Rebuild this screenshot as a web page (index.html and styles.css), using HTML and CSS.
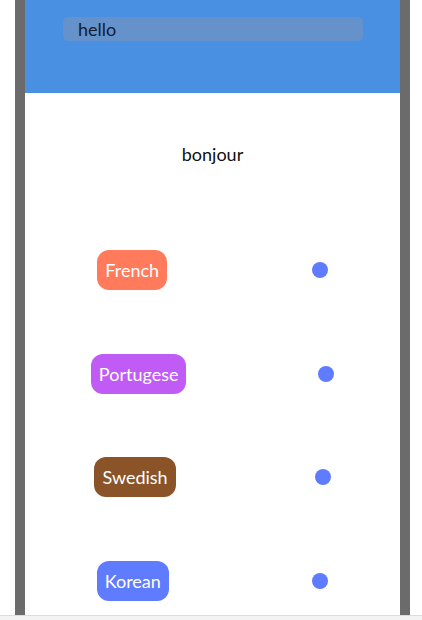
FILE: index.html
```html
<!DOCTYPE html>
<html>
<head>
<meta charset="utf-8">
<link rel="stylesheet" href="styles.css">
</head>
<body>
<div class="page">
  <div class="frame">
    <header class="header">
      <div class="search">hello</div>
    </header>
    <div class="translation">bonjour</div>
    <ul class="langs">
      <li class="row"><span class="pill french">French</span><span class="dot"></span></li>
      <li class="row"><span class="pill portugese">Portugese</span><span class="dot"></span></li>
      <li class="row"><span class="pill swedish">Swedish</span><span class="dot"></span></li>
      <li class="row"><span class="pill korean">Korean</span><span class="dot"></span></li>
    </ul>
  </div>
  <div class="scrollbar"></div>
</div>
</body>
</html>
```

FILE: styles.css
```css
* { box-sizing: border-box; }
html, body { margin: 0; padding: 0; background: #fff; }
body { font-family: Lato, "Open Sans", sans-serif; font-size: 18px; }
.page { width: 422px; height: 620px; display: flex; flex-direction: column; overflow: hidden; }
.frame {
  margin-left: 15px;
  width: 395px;
  height: 615px;
  border-left: 10px solid #6b6b6b;
  border-right: 10px solid #6b6b6b;
  overflow: hidden;
  background: #fff;
}
.header { height: 93px; background: #4a90e2; padding-top: 17px; }
.search {
  margin-left: 38px;
  width: 300px;
  height: 24px;
  border-radius: 5px;
  background: #6592cb;
  color: #0f1d36;
  padding-left: 15px;
  line-height: 25px;
  font-size: 18px;
}
.translation { text-align: center; padding-top: 50px; line-height: 22px; color: #111; font-size: 18px; }
.langs { list-style: none; margin: 85px 0 0; padding: 0; display: flex; flex-direction: column; gap: 63.5px; }
.row { display: flex; justify-content: space-around; align-items: center; height: 40px; }
.pill {
  height: 40px;
  line-height: 40px;
  padding: 0 8px;
  border-radius: 12px;
  color: #fff;
  font-size: 18px;
}
.french { background: #ff7b5c; }
.portugese { background: #c05cf5; }
.swedish { background: #8b5428; }
.korean { background: #5f7cff; }
.dot { width: 16px; height: 16px; border-radius: 50%; background: #5f7cff; }
.scrollbar { height: 5px; border-top: 1px solid #dcdcdc; background: #f3f3f3; }
```
